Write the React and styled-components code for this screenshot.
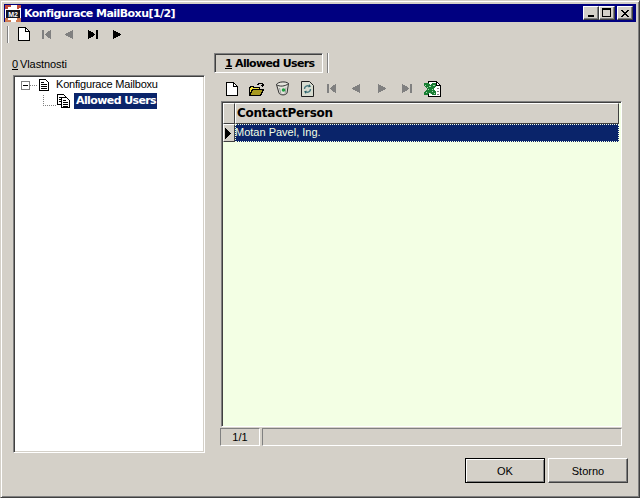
import React from "react";
import styled, { createGlobalStyle } from "styled-components";

const GlobalStyle = createGlobalStyle`
  html, body { margin: 0; padding: 0; background: #d4d0c8; }
  body { font-family: "Liberation Sans", "DejaVu Sans", sans-serif; font-size: 11px; color: #000; }
`;

const boldFont = `"DejaVu Sans", "Liberation Sans", sans-serif`;

const Win = styled.div`
  box-sizing: border-box;
  width: 640px;
  height: 498px;
  display: flex;
  flex-direction: column;
  background: #d4d0c8;
  padding: 3px;
  border: 1px solid;
  border-color: #d4d0c8 #404040 #404040 #d4d0c8;
  box-shadow: inset 1px 1px 0 #fff, inset -1px -1px 0 #808080;
`;

const TitleBar = styled.div`
  height: 18px;
  flex: none;
  display: flex;
  align-items: center;
  background: #000080;
  color: #fff;
  padding: 0 3px 0 1px;
`;

const TitleText = styled.div`
  margin-left: 3px;
  flex: 1;
  font-family: ${boldFont};
  font-weight: bold;
  font-size: 11px;
  letter-spacing: -0.55px;
  white-space: nowrap;
`;

const CapButton = styled.div`
  box-sizing: border-box;
  width: 16px;
  height: 14px;
  margin-left: ${(p) => p.$gap || 0}px;
  background: #d4d0c8;
  border: 1px solid;
  border-color: #fff #404040 #404040 #fff;
  box-shadow: inset -1px -1px 0 #808080;
  display: flex;
  align-items: center;
  justify-content: center;
`;

const ToolBar = styled.div`
  height: 24px;
  flex: none;
  display: flex;
  align-items: center;
  padding-left: 3px;
`;

const Grip = styled.div`
  width: 1px;
  height: 17px;
  background: #808080;
  border-right: 1px solid #fff;
  margin-right: 9px;
`;

const ToolIcon = styled.div`
  width: ${(p) => p.$w || 23}px;
  height: 16px;
  display: flex;
  align-items: center;
  justify-content: flex-start;
  flex: none;
`;

const Content = styled.div`
  flex: 1;
  min-height: 0;
  display: flex;
  padding: 7px 0 0 9px;
`;

const LeftPane = styled.div`
  width: 192px;
  flex: none;
  display: flex;
  flex-direction: column;
  margin-right: 9px;
`;

const PaneLabel = styled.div`
  height: 22px;
  flex: none;
  display: flex;
  align-items: center;
  margin-left: -1px;
  letter-spacing: -0.1px;
  & u { margin-right: 2px; }
`;

const TreeBox = styled.div`
  box-sizing: border-box;
  height: 378px;
  background: #fff;
  border: 1px solid;
  border-color: #808080 #fff #fff #808080;
  box-shadow: inset 1px 1px 0 #404040, inset -1px -1px 0 #d4d0c8;
  padding: 2px 0 0 7px;
`;

const TreeRow = styled.div`
  display: flex;
  align-items: center;
  height: ${(p) => p.$h}px;
  padding-left: ${(p) => p.$indent || 0}px;
`;

const RootLabel = styled.span`
  margin-left: 7px;
  letter-spacing: -0.2px;
  white-space: nowrap;
  position: relative;
  top: -1px;
`;

const SelLabel = styled.span`
  box-sizing: border-box;
  width: 83px;
  height: 16px;
  margin-left: 4px;
  padding-left: 2px;
  background: #0a246a;
  color: #fff;
  font-family: ${boldFont};
  font-weight: bold;
  line-height: 16px;
  letter-spacing: -0.6px;
  white-space: nowrap;
`;

const RightPane = styled.div`
  width: 408px;
  flex: none;
  display: flex;
  flex-direction: column;
`;

const TabStrip = styled.div`
  display: flex;
  height: 20px;
  flex: none;
`;

const Tab = styled.div`
  box-sizing: border-box;
  width: 109px;
  height: 20px;
  border: 1px solid;
  border-color: #808080 #fff #fff #808080;
  box-shadow: inset 1px 1px 0 #404040;
  display: flex;
  align-items: center;
  padding-left: 10px;
  font-family: ${boldFont};
  font-weight: bold;
  letter-spacing: -0.65px;
  font-size: 11px;
  white-space: nowrap;
  & u { margin-right: 3px; }
`;

const TabDivider = styled.div`
  width: 1px;
  height: 20px;
  margin-left: 4px;
  background: #808080;
  border-right: 1px solid #fff;
`;

const GridTools = styled.div`
  height: 25px;
  flex: none;
  display: flex;
  align-items: center;
  padding: 3px 0 0 12px;
`;

const GridBox = styled.div`
  box-sizing: border-box;
  width: 401px;
  height: 326px;
  margin-left: 7px;
  flex: none;
  background: #f3ffe4;
  border: 1px solid;
  border-color: #808080 #fff #fff #808080;
  box-shadow: inset 1px 1px 0 #404040;
  padding: 1px 2px 0 1px;
`;

const HeadRow = styled.div`
  display: flex;
  height: 21px;
`;

const HeadCell = styled.div`
  box-sizing: border-box;
  height: 21px;
  background: #d4d0c8;
  border: 1px solid;
  border-color: #fff #404040 #404040 #fff;
  width: ${(p) => (p.$corner ? "12px" : "auto")};
  flex: ${(p) => (p.$corner ? "none" : 1)};
  padding-left: 1px;
  line-height: 19px;
  font-family: ${boldFont};
  font-weight: bold;
  font-size: 12px;
  letter-spacing: -0.25px;
  color: #000;
`;

const DataRow = styled.div`
  display: flex;
  height: 18px;
`;

const RowMarker = styled.div`
  box-sizing: border-box;
  width: 12px;
  flex: none;
  background: #d4d0c8;
  border: 1px solid;
  border-color: #fff #404040 #404040 #fff;
  display: flex;
  align-items: center;
  padding-left: 1px;
`;

const DataCell = styled.div`
  flex: 1;
  box-sizing: border-box;
  background: #0a246a;
  color: #f3ffe4;
  outline: 1px dotted #f3ffe4;
  outline-offset: -1px;
  line-height: 17px;
`;

const StatusBar = styled.div`
  display: flex;
  margin-top: 1px;
  height: 18px;
  flex: none;
  margin-left: 6px;
`;

const StatusCell = styled.div`
  box-sizing: border-box;
  height: 18px;
  width: ${(p) => p.$w}px;
  margin-right: ${(p) => p.$gap || 0}px;
  border: 1px solid;
  border-color: #808080 #fff #fff #808080;
  display: flex;
  align-items: center;
  justify-content: center;
`;

const Footer = styled.div`
  flex: none;
  height: 36px;
  display: flex;
  justify-content: flex-end;
  padding: 0 8px 0 0;
`;

const Button = styled.div`
  box-sizing: border-box;
  width: 80px;
  height: 25px;
  margin-left: ${(p) => p.$gap || 0}px;
  background: #d4d0c8;
  display: flex;
  align-items: center;
  justify-content: center;
  border: 1px solid;
  border-color: ${(p) => (p.$default ? "#000" : "#fff #404040 #404040 #fff")};
  box-shadow: ${(p) =>
    p.$default
      ? "inset 1px 1px 0 #fff, inset -1px -1px 0 #808080"
      : "inset -1px -1px 0 #808080"};
`;

const px = { shapeRendering: "crispEdges" };

const Logo = () => (
  <svg width="16" height="17" viewBox="0 0 16 17" style={px}>
    <rect width="16" height="17" fill="#fff" />
    <path d="M0 0h6v2H3v2H0zM12 0h4v3h-2v1h-2z" fill="#c04a3a" />
    <path d="M0 13h3v2h3v2H0zM12 13h4v4h-5v-2h1z" fill="#d07a50" />
    <rect x="1" y="5" width="14" height="8" fill="#14141f" />
    <text x="8" y="12" textAnchor="middle" fontSize="7" fontWeight="bold" fontFamily="Liberation Sans" fill="#fff">M2</text>
  </svg>
);

const MinGlyph = () => (
  <svg width="8" height="8" viewBox="0 0 8 8" style={px}>
    <path d="M1 6h6v2H1z" fill="#000" />
  </svg>
);
const MaxGlyph = () => (
  <svg width="10" height="10" viewBox="0 0 10 10" style={px}>
    <path d="M0 0h9v9H0z M1 2v6h7V2z" fill="#000" fillRule="evenodd" />
  </svg>
);
const CloseGlyph = () => (
  <svg width="8" height="7" viewBox="0 0 8 7" style={px}>
    <path d="M0 0h2v1h1v1h2V1h1V0h2v1H7v1H6v1H5v1h1v1h1v1h1v1H6V6H5V5H3v1H2v1H0V6h1V5h1V4h1V3H2V2H1V1H0z" fill="#000" />
  </svg>
);

const NewDoc = () => (
  <svg width="12" height="14" viewBox="0 0 12 14" style={px}>
    <path d="M0.500 0.500h7l4 4v9h-11z" fill="#fff" stroke="#000" />
    <path d="M7.500 0.500v4h4" fill="none" stroke="#000" />
  </svg>
);

const NavIcon = ({ kind, color }) => {
  const paths = {
    first: "M0 0h2v9H0zM3 4h1V3h1V2h1V1h2V0h1v9H8V8H6V7H5V6H4V5H3z",
    prev: "M0 4h1V3h2V2h2V1h2V0h1v9H7V8H5V7H3V6H1V5H0z",
    next: "M0 0h1v1h2v1h2v1h2v1h1v1H7v1H5v1H3v1H1v1H0z",
    last: "M0 0h1v1h2v1h2v1h1v1h1v1H6v1H5v1H3v1H1v1H0zM8 0h2v9H8z",
  };
  return (
    <svg width="10" height="9" viewBox="0 0 10 9" style={px}>
      <path d={paths[kind]} fill={color} />
    </svg>
  );
};

const OpenFolder = () => (
  <svg width="16" height="14" viewBox="0 0 16 14" style={px}>
    <path d="M8 2h1V1h4v1h1v2M12 3h3M13 4h1" stroke="#000" fill="none" />
    <path d="M0.500 5.500h1v-1h3v1h6v2h-7l-3 6z" fill="#f0e040" stroke="#000" />
    <path d="M3.500 7.500h11l-3 6h-11z" fill="#a89a20" stroke="#000" />
  </svg>
);

const Bin = () => (
  <svg width="13" height="15" viewBox="0 0 13 15">
    <path d="M0.500 3.500C2 0.500 10 0 12.500 2.500L11 12c-1 2.500-7 2.500-8 0z" fill="#e4e4dc" stroke="#303030" />
    <path d="M0.500 3.500c2.500 2.500 9 2 12-1" fill="none" stroke="#303030" />
    <path d="M3.500 7l1.500 6M10 6.500L9 13" stroke="#9a9a9a" />
    <circle cx="7.500" cy="9" r="1.800" fill="#20a040" />
  </svg>
);

const RefreshDoc = () => (
  <svg width="13" height="16" viewBox="0 0 13 16">
    <path d="M0.500 0.500h8l4 4v11h-12z" fill="#d8dcd0" stroke="#202020" />
    <path d="M3.500 8a3 3 0 0 1 5-2.500M9.500 8a3 3 0 0 1-5 2.500" fill="none" stroke="#4a7a80" strokeWidth="1.400" />
    <path d="M8 3l2 2.500-2.500 1zM5 13l-2-2.500 2.500-1z" fill="#2a6068" />
  </svg>
);

const ExcelDoc = () => (
  <svg width="17" height="16" viewBox="0 0 17 16" style={px}>
    <path d="M4.500 0.500h8l4 4v11h-12z" fill="#fff" stroke="#000" />
    <path d="M12.500 0.500v4h4" fill="none" stroke="#000" />
    <path d="M0 2h4l2 2 2-2h4v3L9 8l3 3v3H8L6 11l-2 3H0v-3l3-3-3-3z" fill="#1a7f34" />
    <path d="M1 4h1M5 5h2M9 4h2M4 8h1M8 8h1M2 11h1M6 12h1M10 12h1M3 6h1M8 10h1" stroke="#a8d8b0" />
    <path d="M13 7h2M13 10h2M13 13h2" stroke="#808080" />
  </svg>
);

const TreeDoc = () => (
  <svg width="10" height="12" viewBox="0 0 10 12" style={px}>
    <path d="M0.500 0.500h6l3 3v8h-9z" fill="#fff" stroke="#000" />
    <path d="M2 3h3M2 5h6M2 7h6M2 9h6" stroke="#000" />
  </svg>
);

const TreeDocs = () => (
  <svg width="13" height="14" viewBox="0 0 13 14" style={px}>
    <path d="M0.500 0.500h6l2 2v8h-8z" fill="#fff" stroke="#000" />
    <path d="M4.500 3.500h5l3 3v7h-8z" fill="#fff" stroke="#000" />
    <path d="M2 3h3M2 5h2M2 7h2M6 6h3M6 8h5M6 10h5M6 12h5" stroke="#000" />
  </svg>
);

const Expander = () => (
  <svg width="18" height="9" viewBox="0 0 18 9" style={px}>
    <rect x="0.500" y="0.500" width="8" height="8" fill="#fff" stroke="#808080" />
    <path d="M2 4.500h5" stroke="#000" />
    <path d="M9 4.500h8" stroke="#808080" strokeDasharray="1 1" />
  </svg>
);

const Connector = () => (
  <svg width="14" height="11" viewBox="0 0 14 11" style={px}>
    <path d="M0.500 0v10.500H14" stroke="#808080" fill="none" strokeDasharray="1 1" />
  </svg>
);

const RowArrow = () => (
  <svg width="6" height="11" viewBox="0 0 6 11" style={px}>
    <path d="M0 0h1v1h1v1h1v1h1v1h1v1h1v1H5v1H4v1H3v1H2v1H1v1H0z" fill="#000" />
  </svg>
);

function App() {
  return (
    <Win>
      <GlobalStyle />
      <TitleBar>
        <Logo />
        <TitleText>Konfigurace MailBoxu[1/2]</TitleText>
        <CapButton><MinGlyph /></CapButton>
        <CapButton><MaxGlyph /></CapButton>
        <CapButton $gap={2}><CloseGlyph /></CapButton>
      </TitleBar>

      <ToolBar>
        <Grip />
        <ToolIcon $w={24}><NewDoc /></ToolIcon>
        <ToolIcon><NavIcon kind="first" color="#808080" /></ToolIcon>
        <ToolIcon><NavIcon kind="prev" color="#808080" /></ToolIcon>
        <ToolIcon $w={25}><NavIcon kind="last" color="#000" /></ToolIcon>
        <ToolIcon><NavIcon kind="next" color="#000" /></ToolIcon>
      </ToolBar>

      <Content>
        <LeftPane>
          <PaneLabel><u>0</u>Vlastnosti</PaneLabel>
          <TreeBox>
            <TreeRow $h={14}>
              <Expander />
              <TreeDoc />
              <RootLabel>Konfigurace Mailboxu</RootLabel>
            </TreeRow>
            <TreeRow $h={17} $indent={22}>
              <Connector />
              <TreeDocs />
              <SelLabel>Allowed Users</SelLabel>
            </TreeRow>
          </TreeBox>
        </LeftPane>

        <RightPane>
          <TabStrip>
            <Tab><u>1</u>Allowed Users</Tab>
            <TabDivider />
          </TabStrip>
          <GridTools>
            <ToolIcon><NewDoc /></ToolIcon>
            <ToolIcon $w={27}><OpenFolder /></ToolIcon>
            <ToolIcon $w={25}><Bin /></ToolIcon>
            <ToolIcon $w={26}><RefreshDoc /></ToolIcon>
            <ToolIcon $w={25}><NavIcon kind="first" color="#808080" /></ToolIcon>
            <ToolIcon $w={26}><NavIcon kind="prev" color="#808080" /></ToolIcon>
            <ToolIcon $w={24}><NavIcon kind="next" color="#808080" /></ToolIcon>
            <ToolIcon $w={22}><NavIcon kind="last" color="#808080" /></ToolIcon>
            <ToolIcon><ExcelDoc /></ToolIcon>
          </GridTools>
          <GridBox>
            <HeadRow>
              <HeadCell $corner />
              <HeadCell>ContactPerson</HeadCell>
            </HeadRow>
            <DataRow>
              <RowMarker><RowArrow /></RowMarker>
              <DataCell>Motan Pavel, Ing.</DataCell>
            </DataRow>
          </GridBox>
          <StatusBar>
            <StatusCell $w={40} $gap={2}>1/1</StatusCell>
            <StatusCell $w={360} />
          </StatusBar>
        </RightPane>
      </Content>

      <Footer>
        <Button $default>OK</Button>
        <Button $gap={3}>Storno</Button>
      </Footer>
    </Win>
  );
}

export default App;
